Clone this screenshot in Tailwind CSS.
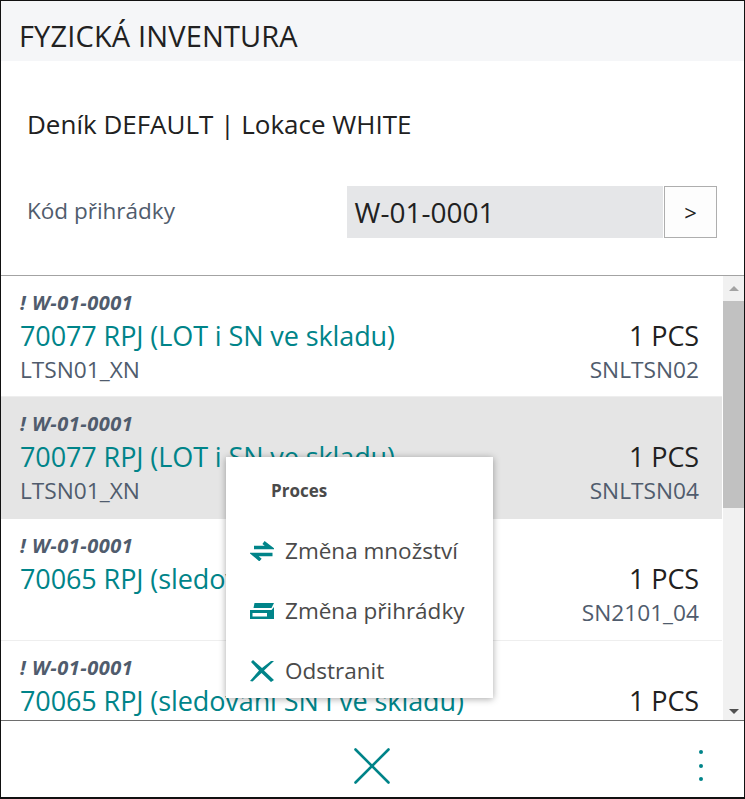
<!DOCTYPE html>
<html lang="en">
<head>
  <title>Fyzická inventura</title>
  <meta charset="UTF-8" />
  <script src="https://cdn.jsdelivr.net/npm/@tailwindcss/browser@4"></script>
</head>
<body class="bg-white">
  <div class="relative h-[799px] w-[745px] overflow-hidden border-x border-t border-b-2 border-[#111] font-['Open_Sans',sans-serif]">

    <!-- header -->
    <div class="flex h-[60px] items-center bg-[#f5f6f8] pt-[9px] pl-[18px] text-[29px] tracking-[0.15px] text-[#212121]">FYZICKÁ INVENTURA</div>

    <div class="px-[26px] pt-[45px] text-[26px] leading-[36px] text-[#212121]">Deník DEFAULT | Lokace WHITE</div>

    <!-- bin code -->
    <div class="mt-[44px] flex h-[52px] items-center pl-[26px] pr-[27px]">
      <div class="w-[320px] pb-[2px] text-[22.5px] text-[#505c6d]">Kód přihrádky</div>
      <div class="flex h-full w-[317px] items-center bg-[#e5e6e8] pl-[8px] text-[28px] text-[#212121]">W-01-0001</div>
      <div class="ml-[1px] flex h-full w-[53px] items-center justify-center border border-[#aeaeae] bg-[#fdfdfd] text-[22px] text-[#212121]">&gt;</div>
    </div>

    <!-- list -->
    <div class="relative mt-[37px] h-[446px] overflow-hidden border-y border-t-[#a3a3a3] border-b-[#6e6e6e]">
      <div class="mr-[22px]">
        <div class="h-[121px] border-b border-[#eeeeee] pt-[15px] pr-[23px] pl-[19px]">
          <div class="text-[20px] leading-[24px] font-bold tracking-[0.5px] text-[#505c6d] italic">! W-01-0001</div>
          <div class="flex justify-between text-[27px] leading-[41px] tracking-[-0.1px]"><span class="text-[#008489]">70077 RPJ (LOT i SN ve skladu)</span><span class="text-[#212121]">1 PCS</span></div>
          <div class="flex justify-between text-[22.7px] leading-[28px] text-[#505c6d]"><span>LTSN01_XN</span><span>SNLTSN02</span></div>
        </div>
        <div class="h-[122px] bg-[#e5e5e5] pt-[15px] pr-[23px] pl-[19px]">
          <div class="text-[20px] leading-[24px] font-bold tracking-[0.5px] text-[#505c6d] italic">! W-01-0001</div>
          <div class="flex justify-between text-[27px] leading-[41px] tracking-[-0.1px]"><span class="text-[#008489]">70077 RPJ (LOT i SN ve skladu)</span><span class="text-[#212121]">1 PCS</span></div>
          <div class="flex justify-between text-[22.7px] leading-[28px] text-[#505c6d]"><span>LTSN01_XN</span><span>SNLTSN04</span></div>
        </div>
        <div class="h-[122px] border-b border-[#eeeeee] pt-[15px] pr-[23px] pl-[19px]">
          <div class="text-[20px] leading-[24px] font-bold tracking-[0.5px] text-[#505c6d] italic">! W-01-0001</div>
          <div class="flex justify-between text-[27px] leading-[41px] tracking-[-0.1px]"><span class="text-[#008489]">70065 RPJ (sledování SN i ve skladu)</span><span class="text-[#212121]">1 PCS</span></div>
          <div class="flex justify-end text-[22.7px] leading-[28px] text-[#505c6d]"><span>SN2101_04</span></div>
        </div>
        <div class="h-[121px] pt-[15px] pr-[23px] pl-[19px]">
          <div class="text-[20px] leading-[24px] font-bold tracking-[0.5px] text-[#505c6d] italic">! W-01-0001</div>
          <div class="flex justify-between text-[27px] leading-[41px] tracking-[-0.1px]"><span class="text-[#008489]">70065 RPJ (sledování SN i ve skladu)</span><span class="text-[#212121]">1 PCS</span></div>
        </div>
      </div>

      <!-- scrollbar -->
      <div class="absolute inset-y-0 right-0 flex w-[21px] flex-col bg-[#f1f1f1]">
        <div class="flex h-[25px] items-center justify-center">
          <div class="h-0 w-0 border-x-[5px] border-b-[5px] border-x-transparent border-b-[#a3a3a3]"></div>
        </div>
        <div class="h-[207px] bg-[#c1c1c1]"></div>
        <div class="flex-1"></div>
        <div class="flex h-[18px] items-center justify-center">
          <div class="h-0 w-0 border-x-[5px] border-t-[5px] border-x-transparent border-t-[#505050]"></div>
        </div>
      </div>
    </div>

    <!-- footer -->
    <div class="relative flex h-[76px] items-start justify-center pt-[27px] pr-[2px]">
      <svg class="h-[36px] w-[36px]" viewBox="0 0 36 36" fill="none" stroke="#008489" stroke-width="2.6" stroke-linecap="round"><path d="M1.5 1.5 34.5 34.5M34.5 1.5 1.5 34.5"/></svg>
      <div class="absolute top-[29px] right-[41px] flex flex-col gap-[9.5px]">
        <div class="h-[4px] w-[4px] rounded-full bg-[#008489]"></div>
        <div class="h-[4px] w-[4px] rounded-full bg-[#008489]"></div>
        <div class="h-[4px] w-[4px] rounded-full bg-[#008489]"></div>
      </div>
    </div>

    <!-- context menu -->
    <div class="absolute top-[456px] left-[225px] h-[241px] w-[267px] bg-white shadow-[0_1px_7px_rgba(0,0,0,0.35)]">
      <div class="pt-[22px] pl-[45px] text-[17px] leading-[24px] font-bold text-[#4a4a4a]">Proces</div>
      <div class="mt-[18px] flex h-[60px] items-center gap-[11px] pl-[24px] text-[22.5px] text-[#4a4a4a]">
        <svg class="h-[20px] w-[24px]" viewBox="0 0 24 20" fill="none" stroke="#008489" stroke-width="3.6"><path d="M4 6.500H20L13.500 1.500M22.500 13.500H4L10.500 19"/></svg>
        <span>Změna množství</span>
      </div>
      <div class="flex h-[60px] items-center gap-[11px] pl-[24px] text-[22.5px] text-[#4a4a4a]">
        <svg class="h-[16px] w-[24px]" viewBox="0 0 24 16" fill="#008489" fill-rule="evenodd"><path d="M4.500 0H24L21.500 5H3.500zM0 7H21.500L24 4V16H0zM2.500 10V13.500H17V10z"/></svg>
        <span>Změna přihrádky</span>
      </div>
      <div class="flex h-[60px] items-center gap-[11px] pl-[24px] text-[22.5px] text-[#4a4a4a]">
        <svg class="h-[22px] w-[24px]" viewBox="0 0 24 22" fill="#008489"><path d="M3 0 12 8 21 1 24 1 14 10.500 24 20 21 22 11.500 13 2.500 21.500 0 21 9 10.500 1 2z"/></svg>
        <span>Odstranit</span>
      </div>
    </div>
  </div>
</body>
</html>
